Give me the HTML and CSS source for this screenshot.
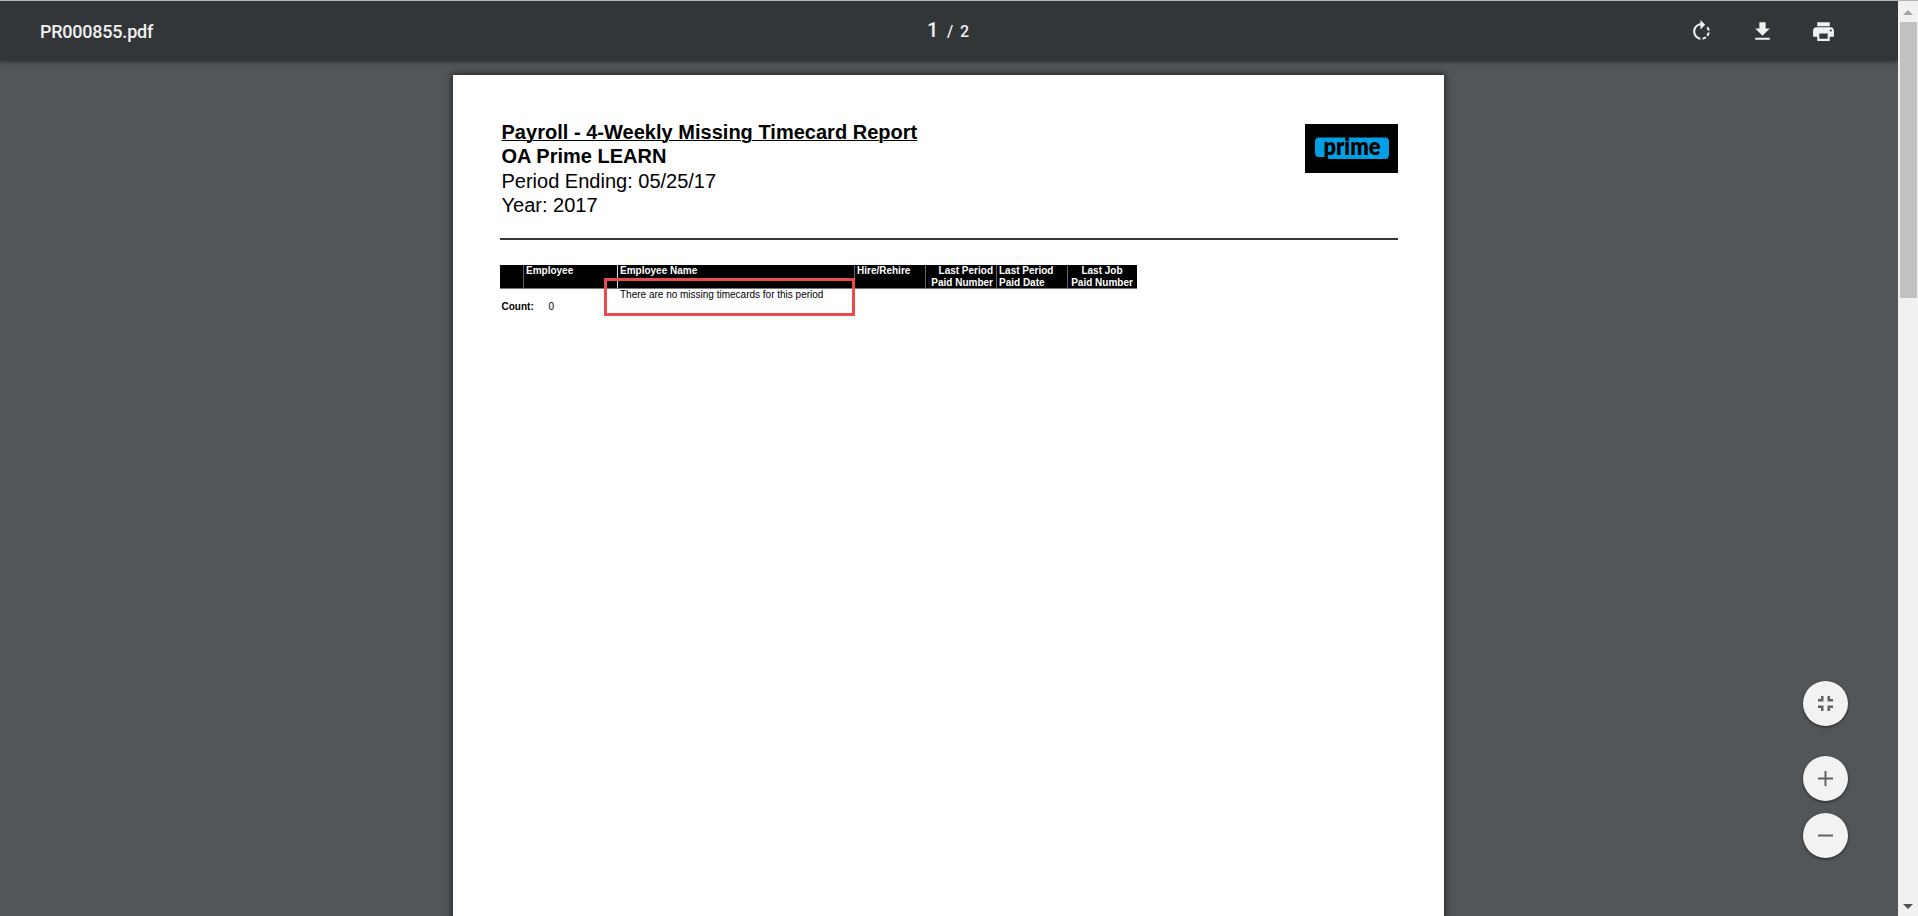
FILE: index.html
```
<!DOCTYPE html>
<html lang="en">
<head>
<meta charset="utf-8">
<title>PR000855.pdf</title>
<link rel="stylesheet" href="styles.css">
</head>
<body>
<div class="viewer">
  <div class="main">
    <header class="toolbar">
      <div class="filename">PR000855.pdf</div>
      <div class="pages"><span class="current">1</span><span class="slash">/</span><span class="total">2</span></div>
      <div class="actions">
        <svg class="icon" viewBox="0 0 24 24"><path d="M15.55 5.55L11 1v3.07C7.06 4.56 4 7.92 4 12s3.05 7.44 7 7.93v-2.02c-2.84-.48-5-2.94-5-5.91s2.16-5.43 5-5.91V10l4.55-4.45zM19.93 11c-.17-1.39-.72-2.73-1.62-3.89l-1.42 1.42c.54.75.88 1.6 1.02 2.47h2.02zM13 17.9v2.02c1.39-.17 2.74-.71 3.9-1.61l-1.44-1.44c-.75.54-1.59.89-2.46 1.03zm3.89-2.42l1.42 1.41c.9-1.16 1.45-2.5 1.62-3.89h-2.02c-.14.87-.48 1.72-1.02 2.48z"/></svg>
        <svg class="icon" viewBox="0 0 24 24"><path d="M19 9h-4V3H9v6H5l7 7 7-7zM5 18v2h14v-2H5z"/></svg>
        <svg class="icon" viewBox="0 0 24 24"><path d="M19 8H5c-1.66 0-3 1.34-3 3v6h4v4h12v-4h4v-6c0-1.66-1.34-3-3-3zm-3 11H8v-5h8v5zm3-7c-.55 0-1-.45-1-1s.45-1 1-1 1 .45 1 1-.45 1-1 1zm-1-9H6v4h12V3z"/></svg>
      </div>
    </header>
    <div class="canvas">
      <article class="page">
        <div class="heading">
          <div class="titles">
            <div class="title">Payroll - 4-Weekly Missing Timecard Report</div>
            <div class="company">OA Prime LEARN</div>
            <div class="period">Period Ending: 05/25/17</div>
            <div class="year">Year: 2017</div>
          </div>
          <svg class="logo" viewBox="0 0 93 49">
            <rect width="93" height="49" fill="#000"/>
            <path d="M14 13.5H80q4 0 4 4V31q0 4-4 4H23V33H14q-4 0-4-4V17.500q0-4 4-4z" fill="#009fe3"/>
            <text class="logo-text" x="18.500" y="31" textLength="57" lengthAdjust="spacingAndGlyphs">prime</text>
          </svg>
        </div>
        <div class="rule"></div>
        <div class="report">
          <div class="thead">
            <div class="cell"></div>
            <div class="cell employee">Employee</div>
            <div class="cell name">Employee Name</div>
            <div class="cell hire">Hire/Rehire</div>
            <div class="cell right">Last Period<br>Paid Number</div>
            <div class="cell paid">Last Period<br>Paid Date</div>
            <div class="cell center">Last Job<br>Paid Number</div>
          </div>
          <div class="message">There are no missing timecards for this period</div>
          <div class="count"><b>Count:</b><span>0</span></div>
          <div class="highlight"></div>
        </div>
      </article>
    </div>
    <div class="zoom">
      <div class="fab fit"><svg viewBox="0 0 15 15"><path d="M0 5V3h3V0h2.500v5.500H0zM9.500 0H12v3h3v2.500H9.500zM0 9.500h5.500V15H3v-3H0zM9.500 9.500H15V12h-3v3H9.500z"/></svg></div>
      <div class="fab plus"><svg viewBox="0 0 15 15"><path d="M0 6.500h6.500V0h2v6.500H15v2H8.500V15h-2V8.500H0z"/></svg></div>
      <div class="fab"><svg viewBox="0 0 15 15"><path d="M0 6.500h15v2H0z"/></svg></div>
    </div>
  </div>
  <div class="scrollbar">
    <svg class="arrow up" viewBox="0 0 10 5"><path d="M0 5L5 0l5 5z"/></svg>
    <div class="thumb"></div>
    <svg class="arrow down" viewBox="0 0 10 5"><path d="M0 0h10L5 5z"/></svg>
  </div>
</div>
</body>
</html>
```
FILE: styles.css
```
* { box-sizing: border-box; }
body { margin: 0; background: #525659; overflow: hidden; }
.viewer { display: flex; height: 916px; border-top: 1px solid #b3b4b8; }
.main { position: relative; width: 1898px; display: flex; flex-direction: column; overflow: hidden; }

.toolbar {
  position: relative; z-index: 2; flex: none; height: 60px;
  display: grid; grid-template-columns: 1fr auto 1fr; align-items: center;
  padding: 0 62px 0 40px; background: #323639; color: #f1f1f1;
  font-family: Roboto, sans-serif; font-weight: 500;
  box-shadow: 0 1px 4px rgba(0, 0, 0, .45);
}
.filename { font-size: 18px; letter-spacing: -.23px; }
.pages { display: flex; align-items: baseline; font-size: 16px; padding-bottom: 3px; margin-left: 20px; }
.current { font-size: 20px; width: 20px; }
.slash { width: 13px; }
.actions { display: flex; justify-content: flex-end; gap: 36px; }
.icon { width: 25px; height: 25px; fill: #f1f1f1; }

.canvas { flex: 1; padding: 14px 0 0 453px; }
.page {
  width: 990.500px; height: 1280px; padding: 48px 45.500px 0 47px; background: #fff; color: #000;
  box-shadow: 0 0 7px 1px rgba(0, 0, 0, .6);
  font-family: "Liberation Sans", Arial, sans-serif;
}
.heading { display: flex; justify-content: space-between; height: 114px; }
.titles { margin-top: -3px; padding: 0 0 0 1.500px; font-size: 20px; line-height: 24.400px; white-space: nowrap; }
.title, .company { font-weight: bold; }
.title { text-decoration: underline; text-decoration-thickness: 1px; text-underline-offset: 1px; letter-spacing: .02px; }
.logo { width: 93px; height: 49px; margin-top: 1px; }
.logo-text { font: 800 24px Lato, sans-serif; fill: #000; }
.rule { height: 2px; margin-top: 1px; background: #38383a; }

.report { position: relative; width: 637px; margin-top: 25px; font-size: 10px; line-height: 12px; }
.thead {
  display: grid; grid-template-columns: 23px 94px 237px 71px 71px 71px 70px;
  height: 24px; background: #000; color: #fff; font-weight: bold; border-bottom: 1px solid #777;
}
.cell { padding-left: 2px; margin-top: 0; line-height: 12px; white-space: nowrap; border-left: 1px solid #666; }
.cell:not(:first-child) { line-height: 11.500px; }
.cell:first-child { border-left: 0; }
.name { border-left-color: #ddd; }
.right { text-align: right; padding-right: 3px; }
.center { text-align: center; padding: 0 1px 0 0; }
.message { padding-left: 120px; }
.count { display: flex; padding-left: 1.500px; }
.count b { width: 47px; }
.highlight { position: absolute; left: 104px; top: 13px; width: 251px; height: 38px; border: 3px solid #e84c4a; }

.zoom { position: absolute; right: 50px; top: 680px; z-index: 3; display: flex; flex-direction: column; gap: 12px; }
.fab {
  width: 45px; height: 45px; border-radius: 50%; background: #f2f2f2;
  display: flex; align-items: center; justify-content: center;
  box-shadow: 0 1px 3px rgba(0, 0, 0, .6);
}
.fab svg { width: 15px; height: 15px; fill: #616161; }
.fit { margin-bottom: 18px; }

.scrollbar { width: 20px; background: #f1f1f1; display: flex; flex-direction: column; align-items: center; padding: 9px 0 7px; }
.arrow { width: 10px; height: 5px; fill: #505050; }
.up { fill: #a3a3a3; }
.thumb { width: 17px; height: 276px; margin-top: 7px; background: #c1c1c1; }
.down { margin-top: auto; }
```
